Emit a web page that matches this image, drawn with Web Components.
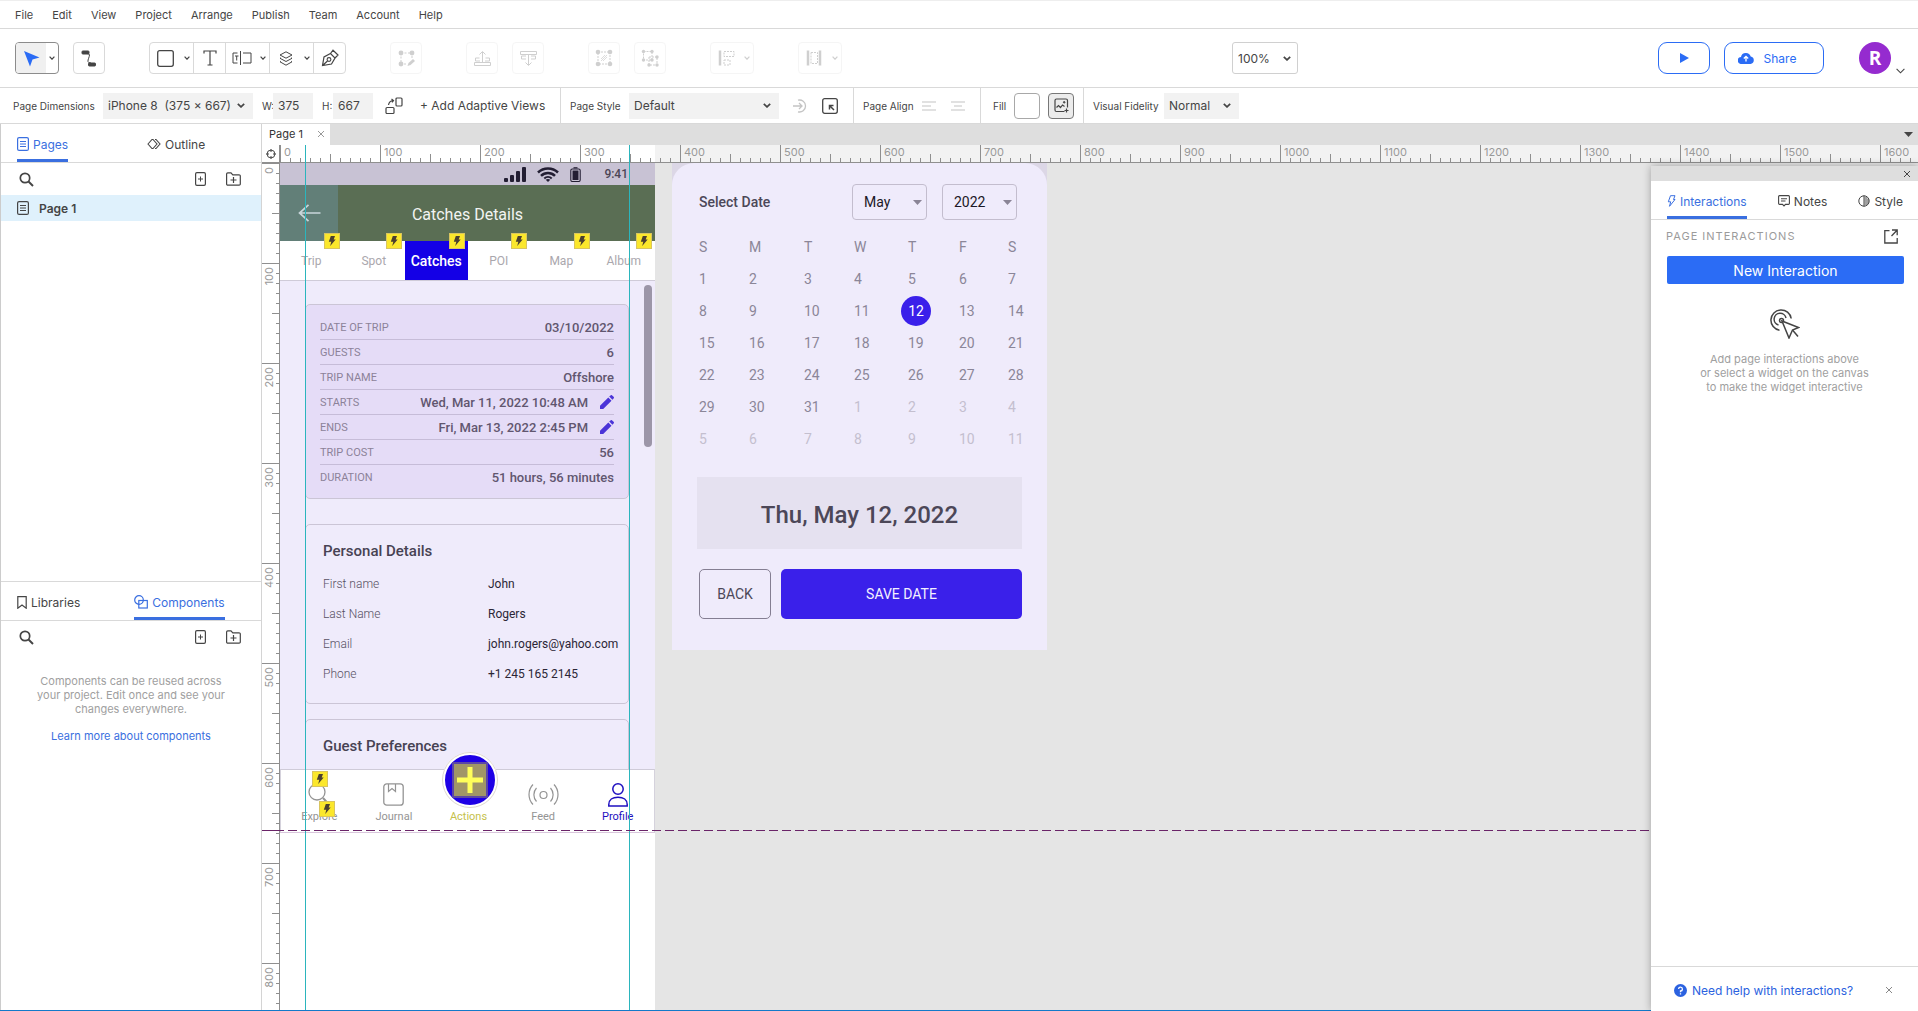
<!DOCTYPE html>
<html lang="en">
<head>
<meta charset="utf-8">
<title>Page 1</title>
<style>
  html, body { height: 100%; }
  body { margin: 0; font-family: Inter, "Liberation Sans", sans-serif; color: #454545; background: #fff; overflow: hidden; }
</style>
</head>
<body>
<design-app></design-app>
<script>
const ICONS = {
  cursor: [17, 17, '<path fill="currentColor" stroke="none" d="M1 1 16.500 7.500 9.500 9.500 7 16.500Z"/>'],
  chev: [6, 4, '<path stroke-width="1.2" d="M.6.6 3 3.2 5.400.6"/>'],
  chevBold: [8, 5, '<path stroke-width="1.7" d="M.8.8 4 3.900 7.200.8"/>'],
  connector: [16, 17, '<path d="M6 3.500C13 3.500 2 13 10 13"/><rect x="1" y="1" width="7" height="3" rx=".8" fill="currentColor"/><rect x="7.500" y="13" width="7" height="3" rx=".8" fill="currentColor"/>'],
  square: [17, 17, '<rect x=".7" y=".7" width="15.600" height="15.600" rx="2" stroke-width="1.3"/>'],
  type: [14, 16, '<path stroke-width="1.2" d="M1 3.500V1H13V3.500M7 1V15M4.500 15H9.500"/>'],
  field: [20, 14, '<path d="M5.500 2H1V12H5.500M8.500 0V14M11 2H19V12H11M3 5H6.500M4.700 5V9.500"/>'],
  layers: [14, 15, '<path d="M7 .8 13 4 7 7.200 1 4ZM1.800 6.800 1 7.300 7 10.500 13 7.300 12.200 6.800M1.800 10.200 1 10.800 7 14.200 13 10.800 12.200 10.200"/>'],
  pen: [18, 18, '<path stroke-width="1.2" d="M1.500 16.500 3 8 9.500 4.500 14 9 10.500 15ZM9.500 4.500 12 1.200 17 6 14 9M1.500 16.500 6.500 12"/><circle cx="8" cy="10.500" r="1.900" stroke-width="1.1"/>'],
  editPts: [17, 17, '<path stroke-dasharray="2 1.5" d="M3 3H14V9M3 3V14H9"/><g fill="currentColor" stroke="none"><circle cx="3" cy="3" r="2.400"/><circle cx="14" cy="3" r="2.400"/><circle cx="3" cy="14" r="2.400"/><path d="M9.500 16 10.500 13 15 9 17 11 12.500 15Z"/></g>'],
  front: [17, 17, '<path d="M8.500 12V2M5.500 4.500 8.500 1.500 11.500 4.500M5.500 8H1.500V11H6M11.500 8H15.500V11H11M.5 12.500H16.500V15.500H.5Z"/>'],
  back: [17, 17, '<path d="M.5 1.500H16.500V4.500H.5ZM6 6H1.500V9H6M11 6H15.500V9H11M8.500 5V15M5.500 12.500 8.500 15.500 11.500 12.500"/>'],
  group: [18, 18, '<path stroke-dasharray="2 1" d="M3 3H15V15H3Z"/><path stroke-width=".7" d="M6 10 10 6M6 12 12 6M8 12 12 8"/><g fill="currentColor" stroke="none"><circle cx="3" cy="3" r="2.300"/><circle cx="15" cy="3" r="2.300"/><circle cx="3" cy="15" r="2.300"/><circle cx="15" cy="15" r="2.300"/></g>'],
  ungroup: [18, 18, '<path stroke-dasharray="2 1" d="M2.500 2.500H11V11H2.500ZM8 8H16V16H8Z"/><g fill="currentColor" stroke="none"><circle cx="2.500" cy="2.500" r="1.700"/><circle cx="11" cy="2.500" r="1.700"/><circle cx="2.500" cy="11" r="1.700"/><circle cx="11" cy="11" r="1.700"/><circle cx="16" cy="8" r="1.700"/><circle cx="8" cy="16" r="1.700"/><circle cx="16" cy="16" r="1.700"/></g>'],
  align: [17, 16, '<path stroke-width="2.500" d="M2 .5V15.500"/><path stroke-dasharray="2 1" d="M6 1.500H16V6.500H6ZM6 10H12V15H6Z"/>'],
  distribute: [16, 16, '<path stroke-width="2.500" d="M2 .5V15.500M14 .5V15.500"/><path stroke-dasharray="2 1" d="M5 2.500H11.500V13.500H5Z"/>'],
  play: [9, 10, '<path fill="currentColor" stroke="none" d="M0 0 9 5 0 10Z"/>'],
  cloud: [16, 12, '<path fill="currentColor" stroke="none" d="M3.500 12A3.500 3.500 0 0 1 3 5 5 5 0 0 1 12.700 4.500 3.800 3.800 0 0 1 12.500 12Z"/><path stroke="#fff" stroke-width="1.300" d="M8 9.500V4.500M5.800 6.500 8 4.300 10.200 6.500"/>'],
  chevThin: [9, 6, '<path stroke-width="1.100" d="M.6.8 4.500 4.800 8.400.8"/>'],
  adaptive: [18, 18, '<rect x="11" y="1" width="6" height="8" rx="1" stroke-width="1.200"/><rect x="1" y="10.500" width="8" height="6" rx="1" stroke-width="1.200"/><path stroke-width="1.200" d="M3.500 8C4 5 5 4 8 3.500M6.500 2 8.500 3.500 7 5.300"/>'],
  pushStyle: [14, 14, '<path stroke-width="1.300" d="M5 1.200A6 6 0 1 1 5 12.800M0 7H9M6 4 9 7 6 10"/>'],
  updStyle: [16, 16, '<rect x=".7" y=".7" width="14.600" height="14.600" rx="2" stroke-width="1.300"/><path stroke-width="1.500" d="M12 12 7.500 7.500M7.500 11.500V7.500H11.500"/>'],
  alignL: [14, 10, '<path stroke-width="1.200" d="M0 1H14M0 5H9M0 9H14"/>'],
  alignC: [14, 10, '<path stroke-width="1.200" d="M0 1H14M3 5H11M0 9H14"/>'],
  image: [15, 15, '<path stroke-width="1.200" d="M10.500 13.500H2.500A1.500 1.500 0 0 1 1 12V2.500A1.500 1.500 0 0 1 2.500 1H12A1.500 1.500 0 0 1 13.500 2.500V9.500M2.500 9.500 4.500 7.500 6.500 9.500 8.500 7 10.500 8.500M12.500 10.500V14.500M10.500 12.500H14.500"/><circle cx="10.200" cy="4.300" r=".8" fill="currentColor"/>'],
  page: [12, 14, '<rect x=".6" y=".6" width="10.800" height="12.800" rx="1.500" stroke-width="1.200"/><path d="M3 4.500H9M3 7H9M3 9.500H9"/>'],
  outline: [14, 12, '<path stroke-width="1.100" d="M1 6 5 1.500H6L10 6 6 10.500H5ZM8 1.500H9L13 6 9 10.500H8"/>'],
  search: [15, 15, '<circle cx="6" cy="6" r="4.700" stroke-width="1.700"/><path stroke-width="2" d="M9.500 9.500 14 14"/>'],
  addPage: [11, 14, '<rect x=".6" y=".6" width="9.800" height="12.800" rx="1.300" stroke-width="1.200"/><path d="M3 7H8M5.500 4.500V9.500"/>'],
  addFolder: [15, 14, '<path stroke-width="1.200" d="M.6 2A1.200 1.200 0 0 1 1.800.8H5L6.800 2.800H13A1.200 1.200 0 0 1 14.300 4V12A1.200 1.200 0 0 1 13 13.200H1.800A1.200 1.200 0 0 1 .6 12ZM4.500 8H10.500M7.500 5V11"/>'],
  bookmark: [10, 13, '<path stroke-width="1.200" d="M.8.7H9.200V12.200L5 9 .8 12.200Z"/>'],
  shapes: [14, 14, '<circle cx="5" cy="5" r="4.300" stroke-width="1.200"/><rect x="4.800" y="5.500" width="8.500" height="7.500" stroke-width="1.200"/>'],
  origin: [10, 10, '<circle cx="5" cy="5" r="3.900"/><path d="M5 0V3M5 7V10M0 5H3M7 5H10"/>'],
  x: [8, 8, '<path d="M1 1 7 7M7 1 1 7"/>'],
  caret: [9, 5, '<path fill="currentColor" stroke="none" d="M0 0H9L4.500 5Z"/>'],
  boltLine: [9, 12, '<path d="M3.500.7H8L6.500 4.500H8L2.500 11.300 3.700 6.800H1.300Z"/>'],
  bolt: [8, 10, '<path fill="currentColor" stroke="none" d="M2.800 0H7L5.700 3.500H7.700L2.200 10 3.300 5.700H.8Z"/>'],
  note: [12, 12, '<path stroke-width="1.100" d="M1.500.6H10.500A1 1 0 0 1 11.400 1.600V8.500A1 1 0 0 1 10.500 9.400H7.500L6 11 4.500 9.400H1.500A1 1 0 0 1 .6 8.500V1.600A1 1 0 0 1 1.500.6ZM3 3.700H9M3 6H7.500"/>'],
  drop: [12, 12, '<circle cx="6" cy="6" r="5.200"/><path d="M6 .5V11.500M6.500 3H9.500M6.500 5H11M6.500 7H11M6.500 9H10"/>'],
  external: [14, 15, '<path stroke-width="1.300" d="M5.500 1.700H.8V14H13.200V9M8 1H13.200V6.200M13 1.200 7.500 7"/>'],
  target: [30, 30, '<g stroke-width="1.500"><path d="M9.500 21.200A10.200 10.200 0 1 1 21.200 9.500M8.500 16A6 6 0 1 1 16 9"/><circle cx="11.500" cy="11.500" r="2"/><path fill="#fff" d="M12 12 28.500 18.500 22.500 21 19 29Z"/><path d="M22.500 21 28 27.500"/></g>'],
  help: [13, 13, '<circle cx="6.500" cy="6.500" r="6.500" fill="currentColor" stroke="none"/><path stroke="#fff" stroke-width="1.300" d="M4.600 5A1.900 1.900 0 1 1 6.500 7V8.200M6.500 9.200V10.500"/>'],
  signal: [22, 15, '<g fill="currentColor" stroke="none"><rect y="11" width="4" height="4" rx="1"/><rect x="6" y="8" width="4" height="7" rx="1"/><rect x="12" y="4" width="4" height="11" rx="1"/><rect x="18" width="4" height="15" rx="1"/></g>'],
  wifi: [22, 15, '<path stroke-width="2.500" d="M1 5.500A14.500 14.500 0 0 1 21 5.500M4 8.800A10 10 0 0 1 18 8.800"/><path stroke-width="2" d="M7.300 11.500A5.500 5.500 0 0 1 14.700 11.500"/><path fill="currentColor" stroke="none" d="M8.700 12.800A4 4 0 0 1 13.300 12.800L11 15Z"/>'],
  battery: [11, 15, '<rect x=".8" y="2" width="9.400" height="12.500" rx="1.500" stroke-width="1.100"/><rect x="2.500" y="3.500" width="6" height="9.500" fill="currentColor" stroke="none"/><path stroke-width="1.200" d="M3.500.8H7.500"/>'],
  arrow: [23, 18, '<path stroke-width="1.700" d="M22.500 9H1.500M10.500.8 1.500 9 10.500 17.200"/>'],
  pencil: [14, 14, '<path fill="currentColor" stroke="none" d="M0 14V10.800L8.300 2.500 11.500 5.700 3.200 14ZM9.200 1.600 10.500.4A1.200 1.200 0 0 1 12.200.4L13.600 1.800A1.200 1.200 0 0 1 13.600 3.500L12.400 4.800Z"/>'],
  explore: [23, 23, '<circle cx="9" cy="9" r="8" stroke-width="1.300"/><path stroke-width="2" d="M15 15 21 21.500"/>'],
  journal: [21, 23, '<rect x=".8" y=".8" width="19.400" height="21.400" rx="3" stroke-width="1.300"/><path stroke-width="1.200" d="M5.500 1V8.500L9 5.500 12.500 8.500V1"/>'],
  feed: [31, 22, '<circle cx="15.500" cy="12" r="3.500" stroke-width="1.200"/><path stroke-width="1.200" d="M8.500 5A10 10 0 0 0 8.500 18.500M22.500 5A10 10 0 0 1 22.500 18.500M5 1.500A14.500 14.500 0 0 0 5 21.500M26 1.500A14.500 14.500 0 0 1 26 21.500"/>'],
  profile: [20, 24, '<circle cx="10" cy="6" r="5.200" stroke-width="1.500"/><path stroke-width="1.500" d="M.8 23V21.500C.8 17 4.500 14.300 10 14.300S19.200 17 19.200 21.500V23Z"/>'],
  plus: [26, 26, '<path stroke-width="5" d="M13 0V26M0 13H26"/>']
};

const BASE = `*{box-sizing:border-box} button{font:inherit;color:inherit;background:none;border:0;padding:0;margin:0;cursor:pointer}
  select,input{font:inherit;color:inherit;margin:0;border-radius:0;appearance:none;outline:0} a{text-decoration:none}
  .pick{display:grid;align-items:center} .pick>*{grid-area:1/1} .pick ui-icon{justify-self:end;pointer-events:none}
  .pick select{width:100%;height:100%}`;

function define(name, css, html, setup) {
  const t = document.createElement('template');
  t.innerHTML = `<style>${BASE}${css}</style>${html}`;
  customElements.define(name, class extends HTMLElement {
    constructor() {
      super();
      this.attachShadow({ mode: 'open' }).append(t.content.cloneNode(true));
    }
    connectedCallback() { if (setup) setup(this, this.shadowRoot); }
  });
}

define('ui-icon', ':host{display:inline-flex;flex:none} svg{display:block;fill:none;stroke:currentColor}', '<svg aria-hidden="true"></svg>', (el, root) => {
  const [w, h, body] = ICONS[el.getAttribute('name')];
  const svg = root.querySelector('svg');
  svg.setAttribute('width', w);
  svg.setAttribute('height', h);
  svg.setAttribute('viewBox', `0 0 ${w} ${h}`);
  svg.innerHTML = body;
});

define('menu-bar', `:host{display:block;border-top:1px solid #eee;border-bottom:1px solid #d9d9d9}
  nav{display:flex;gap:19px;height:27px;align-items:center;padding-left:15px;font-size:11px}`,
  `<nav>${['File', 'Edit', 'View', 'Project', 'Arrange', 'Publish', 'Team', 'Account', 'Help'].map(t => `<button>${t}</button>`).join('')}</nav>`);

define('tool-button', `:host{display:flex;height:32px;border:1px solid #d9d9d9;border-radius:4px}
  :host([off]){opacity:.25} :host([active]){border-color:#8c8c8c} :host([grouped]){border-width:0 0 0 1px;border-radius:0;height:30px} :host([grouped][first]){border-left:0}
  button{display:grid;place-items:center;width:30px;height:30px} .more{width:12px;padding-right:1px} :host([grouped]) .main{width:31px}
  :host([active]) .main{background:#f0f0f0;color:#2b6cf5;border-radius:3px 0 0 3px} [hidden]{display:none}`,
  `<button class="main"></button><button class="more" aria-label="More"><ui-icon name="chev"></ui-icon></button>`, (el, root) => {
    const main = root.querySelector('.main');
    main.setAttribute('aria-label', el.getAttribute('icon'));
    main.innerHTML = `<ui-icon name="${el.getAttribute('icon')}"></ui-icon>`;
    root.querySelector('.more').hidden = !el.hasAttribute('more');
  });

define('tool-bar', `:host{display:flex;align-items:center;height:59px;padding:0 13px 0 15px;border-bottom:1px solid #d9d9d9}
  .set{display:flex;gap:14px;margin-right:44px} .set.last{margin-right:0} .box{display:flex;border:1px solid #d9d9d9;border-radius:4px}
  .sp1{flex:13} .sp2{flex:12}
  .zoom{width:66px;height:32px;font-size:12px} .zoom select{border:1px solid #d0d0d0;border-radius:3px;background:#fff;padding:0 5px} .zoom ui-icon{margin-right:7px}
  .pill{height:32px;border:1px solid #2b6cf5;border-radius:9px;color:#2b6cf5;display:flex;align-items:center;justify-content:center;font-size:12px}
  .play{width:52px;margin-right:14px} .share{width:100px;gap:10px;padding-right:14px} 
  .me{display:flex;align-items:flex-end;gap:5px;margin-left:35px} .me span{display:grid;place-items:center;width:32px;height:32px;border-radius:50%;background:#952bcf;color:#fff;font:700 19px "Open Sans",sans-serif}`,
  `<div class="set"><tool-button icon="cursor" more active></tool-button><tool-button icon="connector"></tool-button></div>
   <div class="set"><div class="box"><tool-button icon="square" more grouped first></tool-button><tool-button icon="type" grouped></tool-button><tool-button icon="field" more grouped></tool-button><tool-button icon="layers" more grouped></tool-button><tool-button icon="pen" grouped></tool-button></div></div>
   <div class="set"><tool-button icon="editPts" off></tool-button></div>
   <div class="set"><tool-button icon="front" off></tool-button><tool-button icon="back" off></tool-button></div>
   <div class="set"><tool-button icon="group" off></tool-button><tool-button icon="ungroup" off></tool-button></div>
   <div class="set"><tool-button icon="align" more off></tool-button></div>
   <div class="set last"><tool-button icon="distribute" more off></tool-button></div>
   <div class="sp1"></div>
   <div class="pick zoom"><select aria-label="Zoom"><option>100%</option></select><ui-icon name="chevBold"></ui-icon></div>
   <div class="sp2"></div>
   <button class="pill play" aria-label="Preview"><ui-icon name="play"></ui-icon></button>
   <button class="pill share"><ui-icon name="cloud"></ui-icon>Share</button>
   <button class="me" aria-label="Account"><span>R</span><ui-icon name="chevThin"></ui-icon></button>`);

define('style-bar', `:host{display:flex;height:36px;border-bottom:1px solid #d9d9d9;font-size:12px}
  .sec{display:flex;align-items:center;border-right:1px solid #d9d9d9} .sec:last-child{border:0}
  label,.lbl{font-size:10px;white-space:nowrap;flex:none}
  .pick{height:26px} select{background:#f2f2f2;border:0;padding:0 5px} .pick ui-icon{margin-right:8px}
  input{width:40px;height:26px;border:0;background:#f2f2f2;padding:0 5px;margin-right:9px}
  .dim{width:561px;padding-left:13px} .dim>label:first-child{width:90px} .dim .pick{width:150px;margin-right:9px} .dim .wh{width:11px}
  .dim>button:last-child{margin-left:17px;white-space:nowrap} .dim>button:first-of-type{margin-left:3px}
  .sty{width:293px;padding-left:9px} .sty label{width:59px} .sty .pick{width:150px;margin-right:14px} .sty button+button{margin-left:15px} .faint{color:#c4c4c4}
  .aln{width:127px;padding-left:9px} .aln .lbl{width:59px} .aln button+button{margin-left:15px}
  .fil{width:103px;padding-left:12px;gap:8px} .fil .lbl{width:13px} .sw{width:26px;height:26px;border:1px solid #a8a8a8;border-radius:4px;display:grid;place-items:center;flex:none} .sw.on{background:#ececec;border-color:#777}
  .vis{padding-left:9px} .vis label{width:71px} .vis .pick{width:75px} button{display:flex}`,
  `<div class="sec dim"><label for="dim">Page Dimensions</label><div class="pick"><select id="dim"><option>iPhone 8&nbsp; (375 × 667)</option></select><ui-icon name="chevBold"></ui-icon></div>
    <label class="wh" for="w">W:</label><input id="w" value="375"><label class="wh" for="h">H:</label><input id="h" value="667"><button aria-label="Rotate"><ui-icon name="adaptive"></ui-icon></button><button>+ Add Adaptive Views</button></div>
   <div class="sec sty"><label for="ps">Page Style</label><div class="pick"><select id="ps"><option>Default</option></select><ui-icon name="chevBold"></ui-icon></div><button class="faint" aria-label="Create style"><ui-icon name="pushStyle"></ui-icon></button><button aria-label="Update style"><ui-icon name="updStyle"></ui-icon></button></div>
   <div class="sec aln"><span class="lbl">Page Align</span><button class="faint" aria-label="Left"><ui-icon name="alignL"></ui-icon></button><button class="faint" aria-label="Center"><ui-icon name="alignC"></ui-icon></button></div>
   <div class="sec fil"><span class="lbl">Fill</span><button class="sw" aria-label="Fill colour"></button><button class="sw on" aria-label="Fill image"><ui-icon name="image"></ui-icon></button></div>
   <div class="sec vis"><label for="vf">Visual Fidelity</label><div class="pick"><select id="vf"><option>Normal</option></select><ui-icon name="chevBold"></ui-icon></div></div>`);

define('panel-tab', `:host{display:flex} button{display:flex;align-items:center;gap:4px;font-size:12px;border-bottom:3px solid transparent;padding-top:5px;white-space:nowrap}
  :host([selected]) button{color:#3a6fe0;border-color:#3a6fe0}`, `<button role="tab"><slot></slot></button>`, (el, root) => {
    root.querySelector('button').insertAdjacentHTML('afterbegin', `<ui-icon name="${el.getAttribute('icon')}"></ui-icon>`);
  });

define('panel-tools', `:host{display:flex;align-items:center;justify-content:space-between;height:32px;padding:0 20px 0 18px} div{display:flex;gap:20px} button{display:flex}`,
  `<button aria-label="Search"><ui-icon name="search"></ui-icon></button><div><button aria-label="Add page"><ui-icon name="addPage"></ui-icon></button><button aria-label="Add folder"><ui-icon name="addFolder"></ui-icon></button></div>`);

define('side-panel', `:host{display:flex;flex-direction:column;width:262px;flex:none;border-right:1px solid #d4d4d4;border-left:1px solid #ccc}
  section{display:flex;flex-direction:column} .top{height:458px;border-bottom:1px solid #d9d9d9}
  .tabs{display:flex;height:39px;border-bottom:1px solid #d9d9d9;padding-left:16px} .tabs.a{gap:79px} .tabs.b{gap:54px}
  .row{display:flex;align-items:center;gap:10px;height:26px;padding-left:16px;background:#dff1fc;font-size:12px;font-weight:600}
  p{margin:21px 0 0;text-align:center;font-size:11px;line-height:14px;color:#a0a0a0} a{color:#3a6fe0;font-size:11px;line-height:14px;text-align:center;margin-top:13px}`,
  `<section class="top"><div class="tabs a" role="tablist"><panel-tab icon="page" selected>Pages</panel-tab><panel-tab icon="outline">Outline</panel-tab></div><panel-tools></panel-tools><div class="row"><ui-icon name="page"></ui-icon>Page 1</div></section>
   <section><div class="tabs b" role="tablist"><panel-tab icon="bookmark">Libraries</panel-tab><panel-tab icon="shapes" selected>Components</panel-tab></div><panel-tools></panel-tools><p>Components can be reused across<br>your project. Edit once and see your<br>changes everywhere.</p><a href="#">Learn more about components</a></section>`);

define('ruler-strip', `:host{display:flex;overflow:hidden;font-size:11px;line-height:14px;color:#999;--t:#8f8f8f}
  span{flex:none;position:relative}
  :host([dir=x]){height:18px;border-bottom:1px solid var(--t);background:linear-gradient(90deg,#fff 375px,#f2f2f2 375px)}
  :host([dir=x]) span{width:100px;height:17px;padding-left:4px;background:linear-gradient(var(--t),var(--t)) 0 0/1px 17px no-repeat,linear-gradient(var(--t),var(--t)) 50px 9px/1px 8px no-repeat,repeating-linear-gradient(90deg,var(--t) 0 1px,transparent 1px 10px) 0 13px/100px 4px no-repeat}
  :host([dir=y]){flex-direction:column;width:18px;border-right:1px solid var(--t);background:#fff}
  :host([dir=y]) span{height:100px;width:17px;background:linear-gradient(var(--t),var(--t)) 0 0/17px 1px no-repeat,linear-gradient(var(--t),var(--t)) 10px 50px/7px 1px no-repeat,repeating-linear-gradient(180deg,var(--t) 0 1px,transparent 1px 10px) 14px 0/3px 100px no-repeat}
  :host([dir=y]) b{display:block;writing-mode:vertical-rl;transform:rotate(180deg);padding-bottom:4px;width:14px} b{font-weight:400}`, '', (el, root) => {
    for (let i = 0; i <= +el.getAttribute('max'); i++) {
      const s = document.createElement('span');
      s.innerHTML = `<b>${i * 100}</b>`;
      root.append(s);
    }
  });

define('bolt-badge', `:host{display:grid;place-items:center;width:16px;height:16px;background:#fbe72c;border:1px solid #d9c55f;color:#4a3f2f}`, `<ui-icon name="bolt"></ui-icon>`);

define('trip-row', `:host{display:flex;align-items:center;height:25px;border-bottom:1px solid #c6bcd8;color:#61566f} :host(:last-child){border:0}
  span{font-size:11px;color:#8c8299;text-transform:uppercase;margin-right:auto} b{font-size:13px;font-weight:500} button{display:flex;margin-left:12px;color:#4b34d8}`,
  `<span></span><b><slot></slot></b>`, (el, root) => {
    root.querySelector('span').textContent = el.getAttribute('label');
    if (el.hasAttribute('edit')) root.querySelector('b').insertAdjacentHTML('afterend', '<button aria-label="Edit"><ui-icon name="pencil"></ui-icon></button>');
  });

const tripTabs = ['Trip', 'Spot', 'Catches', 'POI', 'Map', 'Album'];
define('phone-screen', `:host{display:flex;flex-direction:column;width:375px;height:848px;background:#fff;font-family:Roboto,"Liberation Sans",sans-serif}
  .status{display:flex;align-items:center;justify-content:flex-end;height:22px;background:#c8c2d4;color:#231e33;padding-right:27px;font-size:12px;font-weight:500}
  .status ui-icon+ui-icon{margin-left:11px} .status span{margin-left:23px;color:#4c4656}
  header{display:grid;grid-template-columns:58px 1fr 58px;height:56px;background:#5a6e54;align-items:center} header button{height:56px;background:#627f78;color:#c9d6da;display:grid;place-items:center} h1{margin:0;padding-top:2px;font-size:16px;font-weight:400;color:#f2f4f2;text-align:center}
  .tabs{display:grid;grid-template-columns:repeat(6,1fr);height:40px;border-bottom:1px solid #cfcbd8} .tabs button{position:relative;font-size:12px;color:#aaa7ad} .tabs .on{background:#1400e6;color:#fff;font-size:14px;font-weight:500} .tabs bolt-badge{position:absolute;top:-8px;right:3px}
  .body{position:relative;height:488px;background:#efebfb;padding:23px 26px 0 25px;overflow:hidden;display:flex;flex-direction:column}
  .bar{position:absolute;right:3px;top:4px;width:8px;height:162px;border-radius:4px;background:#9c96a8}
  section{flex:none;border:1px solid #cbc5d6;border-radius:5px} .trip{background:#e5dcf7;height:195px;padding:10px 14px;margin-bottom:25px}
  .card{padding:15px 17px;height:180px;margin-bottom:15px} h2{margin:0 0 7px;font-size:15px;line-height:22px;font-weight:500;color:#474253}
  dl{display:grid;grid-template-columns:165px 1fr;margin:0;font-size:12px;line-height:30px} dt{color:#575163;font-weight:300} dd{margin:0;color:#2b2636}
  nav{position:relative;display:grid;grid-template-columns:repeat(5,1fr);height:64px;border:1px solid #d5d2dc;border-top-color:#cfcbd8;border-bottom-color:#d9c6dc;font-size:11px;color:#949494}
  nav>button{display:flex;flex-direction:column;align-items:center;justify-content:space-between;padding:13px 0 8px 2px;line-height:14px} .pro{color:#1e0fc0} nav>.act{justify-content:flex-end;color:#c5bf4a}
  nav>.fab{position:absolute;left:50%;top:-18px;margin-left:-26px;width:56px;height:56px;padding:0;border-radius:50%;background:#1e00e6;border:3px solid #fff;color:#ffff5a;outline:1px solid #ddd8d0;outline-offset:-1px;display:grid;place-items:center;place-content:center} .fab i{display:grid;place-items:center;width:36px;height:36px;background:#a19668;border:2px solid #5c48a6}
  .b1,.b2{position:absolute} .b1{left:31px;top:1px} .b2{left:38px;top:31px}`,
  `<div class="status"><ui-icon name="signal"></ui-icon><ui-icon name="wifi"></ui-icon><ui-icon name="battery"></ui-icon><span>9:41</span></div>
   <header><button aria-label="Back"><ui-icon name="arrow"></ui-icon></button><h1>Catches Details</h1></header>
   <div class="tabs">${tripTabs.map(t => `<button${t === 'Catches' ? ' class="on"' : ''}>${t}<bolt-badge></bolt-badge></button>`).join('')}</div>
   <div class="body"><div class="bar"></div>
    <section class="trip"><trip-row label="Date of trip">03/10/2022</trip-row><trip-row label="Guests">6</trip-row><trip-row label="Trip name">Offshore</trip-row><trip-row label="Starts" edit>Wed, Mar 11, 2022 10:48 AM</trip-row><trip-row label="Ends" edit>Fri, Mar 13, 2022 2:45 PM</trip-row><trip-row label="Trip cost">56</trip-row><trip-row label="Duration">51 hours, 56 minutes</trip-row></section>
    <section class="card"><h2>Personal Details</h2><dl><dt>First name</dt><dd>John</dd><dt>Last Name</dt><dd>Rogers</dd><dt>Email</dt><dd>john.rogers@yahoo.com</dd><dt>Phone</dt><dd>+1 245 165 2145</dd></dl></section>
    <section class="card"><h2>Guest Preferences</h2></section></div>
   <nav><button><ui-icon name="explore"></ui-icon>Explore</button><button><ui-icon name="journal"></ui-icon>Journal</button><button class="act">Actions</button><button><ui-icon name="feed"></ui-icon>Feed</button><button class="pro"><ui-icon name="profile"></ui-icon>Profile</button>
    <button class="fab" aria-label="Add"><i><ui-icon name="plus"></ui-icon></i></button><bolt-badge class="b1"></bolt-badge><bolt-badge class="b2"></bolt-badge></nav>`);

const days = [...Array(31).keys()].map(n => n + 1).concat([1, 2, 3, 4, 5, 6, 7, 8, 9, 10, 11]);
let weeks = '';
for (let r = 0; r < 6; r++) {
  weeks += '<tr>' + days.slice(r * 7, r * 7 + 7).map((d, c) => `<td${r * 7 + c > 30 ? ' class="next"' : ''}>${r * 7 + c === 11 ? `<mark>${d}</mark>` : d}</td>`).join('') + '</tr>';
}
define('date-picker', `:host{display:block;width:375px;background:linear-gradient(#dcd7e6 24px,#efebfb 24px);font-family:Roboto,"Liberation Sans",sans-serif}
  .in{background:#efebfb;border-radius:22px 22px 0 0;padding:21px 25px 31px} .head{display:flex;align-items:center;padding:0 5px 0 2px;gap:15px} h2{margin:0 auto 0 0;font-size:14px;font-weight:500;color:#4c4758}
  .pick{width:75px;height:36px;font-size:14px;color:#1c1826} select{border:1px solid #c3bdce;border-radius:4px;background:none;padding:0 11px} .pick ui-icon{margin-right:5px;color:#8a8496}
  table{table-layout:fixed;width:325px;border-collapse:collapse;margin:11px 0 22px 2px;font-size:14px;color:#8b8698} th,td{height:32px;padding:0;text-align:left;font-weight:400} .next{color:#c4bfcf}
  mark{display:grid;place-items:center;width:30px;height:30px;margin:0 0 0 -7px;border-radius:50%;background:#3a20ea;color:#fff}
  .date{display:grid;place-items:center;height:72px;padding-top:4px;background:#e5e1f0;color:#4c4758;font-size:24px;font-weight:500}
  .acts{display:flex;gap:10px;margin:20px 0 0 2px} .acts button{height:50px;border-radius:5px;font-size:14px;color:#4c4758} .back{width:72px} .acts .back{border:1px solid #847e92} .acts .save{flex:1;background:#3a20ea;color:#f3f0ff}`,
  `<div class="in"><div class="head"><h2>Select Date</h2><div class="pick"><select aria-label="Month"><option>May</option></select><ui-icon name="caret"></ui-icon></div><div class="pick"><select aria-label="Year"><option>2022</option></select><ui-icon name="caret"></ui-icon></div></div>
   <table><colgroup><col width="50"><col width="55"><col width="50"><col width="54"><col width="51"><col width="49"><col width="16"></colgroup><thead><tr><th>S</th><th>M</th><th>T</th><th>W</th><th>T</th><th>F</th><th>S</th></tr></thead><tbody>${weeks}</tbody></table>
   <div class="date">Thu, May 12, 2022</div><div class="acts"><button class="back">BACK</button><button class="save">SAVE DATE</button></div></div>`);

define('inspector-panel', `:host{display:flex;flex-direction:column;background:#fff;box-shadow:0 0 8px rgba(0,0,0,.3);width:267px}
  .grip{display:flex;justify-content:flex-end;align-items:center;height:15px;background:#dedede;padding-right:7px}
  .tabs{display:flex;justify-content:space-between;height:39px;border-bottom:1px solid #d9d9d9;padding:0 15px 0 16px}
  .head{display:flex;justify-content:space-between;align-items:center;height:32px;margin:0 20px 0 15px} h3{margin:0;font-size:11px;font-weight:400;letter-spacing:1px;color:#9b9b9b} button{display:flex}
  .new{height:28px;margin:4px 14px 0 16px;background:#2b6cf5;color:#fff;border-radius:2px;justify-content:center;align-items:center;font-size:14px}
  .hint{display:flex;flex-direction:column;align-items:center;margin-top:25px;flex:1} p{margin:13px 0 0;text-align:center;font-size:11px;line-height:14px;color:#a0a0a0}
  footer{display:flex;align-items:center;height:45px;border-top:1px solid #d9d9d9;padding:2px 25px 0 23px;gap:5px;font-size:12px;color:#2b62e0} footer a{color:inherit} footer button{margin-left:auto;color:#888}`,
  `<div class="grip"><button aria-label="Close"><ui-icon name="x"></ui-icon></button></div>
   <div class="tabs" role="tablist"><panel-tab icon="boltLine" selected>Interactions</panel-tab><panel-tab icon="note">Notes</panel-tab><panel-tab icon="drop">Style</panel-tab></div>
   <div class="head"><h3>PAGE INTERACTIONS</h3><button aria-label="Open"><ui-icon name="external"></ui-icon></button></div>
   <button class="new">New Interaction</button>
   <div class="hint"><ui-icon name="target"></ui-icon><p>Add page interactions above<br>or select a widget on the canvas<br>to make the widget interactive</p></div>
   <footer><ui-icon name="help"></ui-icon><a href="#">Need help with interactions?</a><button aria-label="Dismiss"><ui-icon name="x"></ui-icon></button></footer>`);

define('canvas-view', `:host{display:flex;flex-direction:column;flex:1;min-width:0;position:relative;background:#e5e5e5}
  .docs{display:flex;justify-content:space-between;align-items:center;height:21px;background:#dedede;padding-right:5px;flex:none} .doc{display:flex;align-items:center;gap:14px;height:21px;width:68px;padding:0 0 2px 7px;background:#fff;font-size:11px;color:#333} .doc button{display:flex;color:#999}
  .xr{display:flex;height:18px;flex:none} .corner{width:18px;display:grid;place-items:center;background:#fff;border:solid #8f8f8f;border-width:0 1px 1px 0} .xr ruler-strip{flex:1}
  .stage{display:flex;flex:1;min-height:0;overflow:hidden} .art{display:flex;align-items:flex-start;gap:17px}
  .guide{position:absolute;top:21px;bottom:0;width:1px;background:#2bb5bd;left:43px} .guide.r{left:367px}
  .fold{position:absolute;left:0;right:0;top:706px;height:1px;background:linear-gradient(90deg,#6a2468 18px,transparent 18px),repeating-linear-gradient(90deg,#6a2468 0 9px,transparent 9px 13px)}
  inspector-panel{position:absolute;right:0;top:42px;bottom:-1px;z-index:2}`,
  `<div class="docs"><div class="doc">Page 1<button aria-label="Close page"><ui-icon name="x"></ui-icon></button></div><ui-icon name="caret"></ui-icon></div>
   <div class="xr"><div class="corner"><ui-icon name="origin"></ui-icon></div><ruler-strip dir="x" max="16"></ruler-strip></div>
   <div class="stage"><ruler-strip dir="y" max="8"></ruler-strip><div class="art"><phone-screen></phone-screen><date-picker></date-picker></div></div>
   <div class="guide"></div><div class="guide r"></div><div class="fold"></div><inspector-panel></inspector-panel>`);

define('design-app', `:host{display:flex;flex-direction:column;height:100vh} main{display:flex;flex:1;min-height:0;border-bottom:1px solid #1479c9}`,
  `<menu-bar></menu-bar><tool-bar></tool-bar><style-bar></style-bar><main><side-panel></side-panel><canvas-view></canvas-view></main>`);
</script>
</body>
</html>
